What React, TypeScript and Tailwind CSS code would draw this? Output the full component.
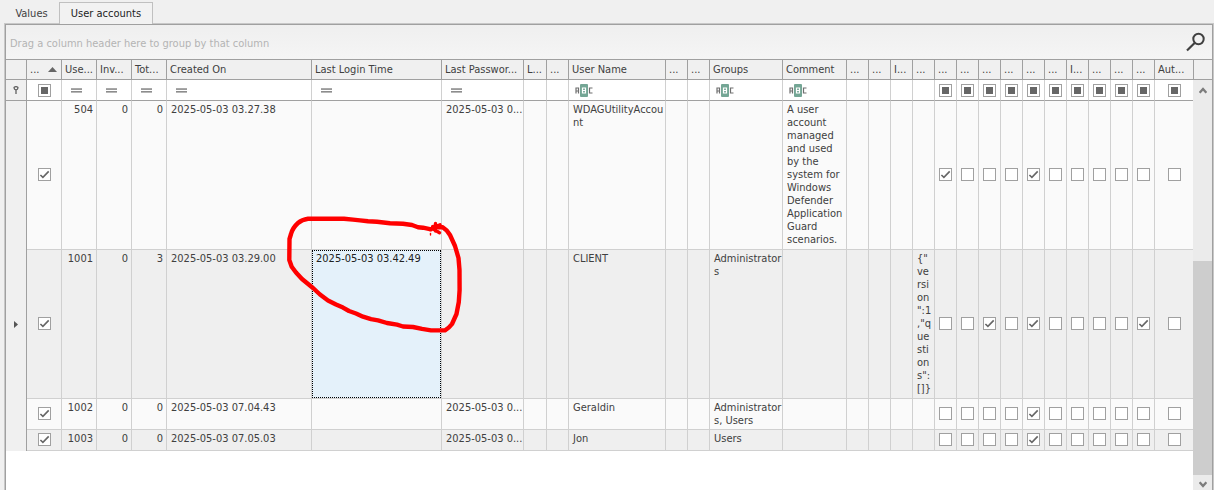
import React from "react";

type Kind = "check" | "number" | "date" | "text" | "none";
type Column = { title: string; width: string; kind: Kind; sorted?: boolean };

const narrow = (title: string, kind: Kind): Column => ({ title, width: "w-[22px]", kind });

const columns: Column[] = [
  { title: "...", width: "w-[35px]", kind: "check", sorted: true },
  { title: "Use...", width: "w-[35px]", kind: "number" },
  { title: "Inv...", width: "w-[35px]", kind: "number" },
  { title: "Tot...", width: "w-[35px]", kind: "number" },
  { title: "Created On", width: "w-[145px]", kind: "date" },
  { title: "Last Login Time", width: "w-[130px]", kind: "date" },
  { title: "Last Passwor...", width: "w-[82px]", kind: "date" },
  { title: "L...", width: "w-[23px]", kind: "none" },
  narrow("...", "none"),
  { title: "User Name", width: "w-[97px]", kind: "text" },
  narrow("...", "none"),
  narrow("...", "none"),
  { title: "Groups", width: "w-[73px]", kind: "text" },
  { title: "Comment", width: "w-[64px]", kind: "text" },
  narrow("...", "none"),
  narrow("...", "none"),
  narrow("I...", "none"),
  narrow("...", "none"),
  narrow("...", "check"),
  narrow("...", "check"),
  narrow("...", "check"),
  narrow("...", "check"),
  narrow("...", "check"),
  narrow("...", "check"),
  narrow("I...", "check"),
  narrow("...", "check"),
  narrow("...", "check"),
  narrow("...", "check"),
  { title: "Aut...", width: "", kind: "check" },
];

type Row = {
  height: string;
  shade: string;
  current?: boolean;
  cells: Record<number, string>;
  checked: number[];
};

const rows: Row[] = [
  {
    height: "h-[149px]",
    shade: "bg-[#fafafa]",
    cells: {
      1: "504",
      2: "0",
      3: "0",
      4: "2025-05-03 03.27.38",
      6: "2025-05-03 0...",
      9: "WDAGUtilityAccou\nnt",
      13: "A user\naccount\nmanaged\nand used\nby the\nsystem for\nWindows\nDefender\nApplication\nGuard\nscenarios.",
    },
    checked: [0, 18, 22],
  },
  {
    height: "h-[149px]",
    shade: "bg-[#efefef]",
    current: true,
    cells: {
      1: "1001",
      2: "0",
      3: "3",
      4: "2025-05-03 03.29.00",
      5: "2025-05-03 03.42.49",
      9: "CLIENT",
      12: "Administrator\ns",
      17: '{"\nve\nrsi\non\n":1\n,"q\nue\nsti\non\ns":\n[]}',
    },
    checked: [0, 20, 22, 27],
  },
  {
    height: "h-[31px]",
    shade: "bg-[#fafafa]",
    cells: {
      1: "1002",
      2: "0",
      3: "0",
      4: "2025-05-03 07.04.43",
      6: "2025-05-03 0...",
      9: "Geraldin",
      12: "Administrator\ns, Users",
    },
    checked: [0, 22],
  },
  {
    height: "h-[21px]",
    shade: "bg-[#efefef]",
    cells: {
      1: "1003",
      2: "0",
      3: "0",
      4: "2025-05-03 07.05.03",
      6: "2025-05-03 0...",
      9: "Jon",
      12: "Users",
    },
    checked: [0, 22],
  },
];

function Tick({ state, label }: { state: "on" | "off" | "mixed"; label: string }) {
  return (
    <label className="mx-auto grid size-[13px]">
      <input
        type="checkbox"
        aria-label={label}
        defaultChecked={state === "on"}
        className="col-start-1 row-start-1 size-[13px] appearance-none border border-[#a0a0a0] bg-white"
      />
      {state === "mixed" && (
        <span className="pointer-events-none col-start-1 row-start-1 m-[3px] bg-[#666666]" />
      )}
      {state === "on" && (
        <svg
          viewBox="0 0 13 13"
          className="pointer-events-none col-start-1 row-start-1 size-[13px]"
          fill="none"
          stroke="#666666"
          strokeWidth="1.6"
        >
          <path d="M2.4 7 L4.9 9.4 L10.7 3.4" />
        </svg>
      )}
    </label>
  );
}

function EqualsIcon() {
  return (
    <svg width="11" height="5" viewBox="0 0 11 5" fill="#707070">
      <rect y="0.400" width="11" height="1.300" />
      <rect y="3.200" width="11" height="1.300" />
    </svg>
  );
}

function AbcIcon() {
  return (
    <svg width="18" height="13" viewBox="0 0 18 13" fill="none">
      <rect x="5" y="0" width="8" height="13" rx="1" fill="#74a695" />
      <path d="M1 9.500V4H3.500V9.500M1 7H3.500" stroke="#6f6f6f" strokeWidth="1.200" />
      <path d="M17.500 4H14.500V9H17.500" stroke="#6f6f6f" strokeWidth="1.200" />
      <path d="M7.500 4H10.500V9H7.500ZM7.500 6.500H10.500" stroke="#ffffff" strokeWidth="1.200" />
    </svg>
  );
}

function FilterCell({ column }: { column: Column }) {
  if (column.kind === "check") return <Tick state="mixed" label="Filter by value" />;
  if (column.kind === "none") return null;
  const isText = column.kind === "text";
  return (
    <button
      type="button"
      aria-label="Filter condition"
      className={isText ? "ml-1.5 block" : "ml-[9px] block pt-px"}
    >
      {isText ? <AbcIcon /> : <EqualsIcon />}
    </button>
  );
}

function BodyCell({ row, column, index }: { row: Row; column: Column; index: number }) {
  const lines =
    index === columns.length - 1
      ? "border-b border-[#d0d0d0]"
      : "border-r border-b border-[#d0d0d0]";
  if (column.kind === "check") {
    return (
      <td className={`pb-px align-middle ${lines}`}>
        <Tick state={row.checked.includes(index) ? "on" : "off"} label="Value" />
      </td>
    );
  }
  const text = row.cells[index] ?? "";
  if (row.current && index === 5) {
    return (
      <td className={`h-px align-top ${lines}`}>
        <div className="h-full border border-dotted border-black bg-[#e4f1fa] px-[3px] pt-px text-[#222222]">
          {text}
        </div>
      </td>
    );
  }
  const place = column.kind === "number" ? "pr-[3px] text-right" : "pl-1 text-left";
  return <td className={`pt-0.5 align-top whitespace-pre ${lines} ${place}`}>{text}</td>;
}

function Scrollbar() {
  return (
    <div className="flex w-[19px] shrink-0 flex-col bg-[#ebebeb]">
      <div className="h-5 shrink-0 border-b border-l border-[#a0a0a0] bg-[#f0f0f0]" />
      <button type="button" aria-label="Scroll up" className="grid h-5 w-full place-items-center">
        <svg width="8" height="7" viewBox="0 0 8 7" fill="none" stroke="#7c7c7c" strokeWidth="2.400">
          <path d="M0.6 5.8 L4 2 L7.4 5.8" />
        </svg>
      </button>
      <div className="grow-[161]" />
      <div className="grow-[214] bg-[#cdcdcd]" />
      <button
        type="button"
        aria-label="Scroll down"
        className="grid h-[15px] w-full place-items-center pt-1"
      >
        <svg width="8" height="7" viewBox="0 0 8 7" fill="none" stroke="#7c7c7c" strokeWidth="2.400">
          <path d="M0.6 1.2 L4 5 L7.4 1.2" />
        </svg>
      </button>
    </div>
  );
}

function Scribble() {
  return (
    <svg
      className="pointer-events-none absolute top-[200px] left-[280px]"
      width="200"
      height="150"
      viewBox="280 200 200 150"
      fill="none"
      stroke="#ff0000"
      strokeLinejoin="round"
      strokeLinecap="round"
    >
      <path
        strokeWidth="4.4"
        d="M431 229.3 L423 227.7 L418 227.2 L412 225 L403 223.7 L390 223.2 L377 221.8 L368 221.2 L360 220.4 L353 219.6 L344 218.7 L308 218.7 Q302 219.5 298 223 Q292.500 228 291 234 L289.500 239 L289.300 260 L291.700 266.700 L296 272.500 L302 279 L313 288 L320 294.500 L328 300.500 L336 304.500 L343 307.600 L349 311 L356 313.500 L363 316.700 L371 319.200 L378 320.300 L387 323 L397 324.700 L403 326.500 L413 327 L422 328.900 L431 330.400 L445 330.400 Q449 328 452 324 L456.500 314 L458.800 302 L459.600 290 L459.500 270 L458.500 258 L455 246 L450 235 Q446.500 229.500 442.500 227.200 L433 227"
      />
      <path strokeWidth="3.4" d="M435.500 223.500 L435.500 231 M430 229.500 L440 224.800 M434 229.500 L439.500 232.700" />
      <path strokeWidth="1.4" d="M430.500 233.500 V235" />
    </svg>
  );
}

export default function App() {
  return (
    <div className="relative flex min-h-screen flex-col bg-[#f0f0f0] pl-1 font-['DejaVu_Sans_Condensed','Noto_Sans',sans-serif] text-[11px] leading-[13px] text-[#404040]">
      <div role="tablist" className="flex h-[23px] shrink-0 items-end">
        <button role="tab" aria-selected="false" type="button" className="h-[21px] w-[55px] pt-px">
          Values
        </button>
        <button
          role="tab"
          aria-selected="true"
          type="button"
          className="relative z-10 -mb-px h-[22px] w-[94px] border border-b-0 border-[#c0c0c0] bg-[#f2f2f2] text-[#222222]"
        >
          User accounts
        </button>
      </div>

      <div className="flex grow flex-col border border-b-0 border-[#c8c8c8]">
        <div className="flex grow flex-col border border-b-0 border-[#a0a0a0] bg-white">
          <div className="flex h-[35px] shrink-0 items-center justify-between border-b border-[#a0a0a0] bg-linear-to-b from-[#efefef] to-[#f5f5f5] pr-1.5 pl-1">
            <span className="pt-0.5 text-[#b4b4b4]">Drag a column header here to group by that column</span>
            <button type="button" aria-label="Search">
              <svg width="20" height="20" viewBox="0 0 20 20" fill="none" stroke="#404040">
                <circle cx="12.500" cy="7" r="5.200" strokeWidth="2" />
                <path d="M8.600 11 L1 18.500" strokeWidth="2.200" />
              </svg>
            </button>
          </div>

          <div className="flex grow items-stretch">
            <div className="min-w-0 grow">
              <table className="w-full table-fixed border-separate border-spacing-0">
                <colgroup>
                  <col className="w-[21px]" />
                  {columns.map((c, i) => (
                    <col key={i} className={c.width} />
                  ))}
                </colgroup>
                <thead>
                  <tr className="h-5 bg-[#f0f0f0]">
                    <th className="border-r border-b border-[#a0a0a0]" />
                    {columns.map((c, i) => (
                      <th
                        key={i}
                        scope="col"
                        className={
                          i === columns.length - 1
                            ? "border-b border-[#a0a0a0] pl-[3px] text-left font-normal whitespace-nowrap"
                            : "border-r border-b border-[#a0a0a0] pl-[3px] text-left font-normal whitespace-nowrap"
                        }
                      >
                        <span className="flex items-center justify-between pr-1">
                          {c.title}
                          {c.sorted && (
                            <svg width="9" height="5" viewBox="0 0 9 5" fill="#666666" className="shrink-0">
                              <path d="M4.500 0 L9 5 H0 Z" />
                            </svg>
                          )}
                        </span>
                      </th>
                    ))}
                  </tr>
                  <tr className="h-[21px] bg-white">
                    <td className="border-r border-b border-[#a0a0a0] bg-[#f0f0f0]">
                      <svg width="6" height="8" viewBox="0 0 6 8" className="mx-auto block" fill="none" stroke="#555555">
                        <path d="M1 1.800 Q1 0.600 3 0.600 Q5 0.600 5 1.800 Q5 3.600 3 4 Q1 3.600 1 1.800 Z M3 4 V8" strokeWidth="1.200" />
                      </svg>
                    </td>
                    {columns.map((c, i) => (
                      <td
                        key={i}
                        className={
                          i === columns.length - 1
                            ? "border-b border-b-[#a0a0a0]"
                            : "border-r border-b border-r-[#d0d0d0] border-b-[#a0a0a0]"
                        }
                      >
                        <FilterCell column={c} />
                      </td>
                    ))}
                  </tr>
                </thead>
                <tbody>
                  {rows.map((row, r) => (
                    <tr key={r} className={`${row.height} ${row.shade}`}>
                      <td className="border-r border-[#a0a0a0] bg-[#f0f0f0] align-middle">
                        {row.current && (
                          <svg width="4" height="7" viewBox="0 0 4 7" className="mx-auto block" fill="#555555">
                            <path d="M0 0 L4 3.500 L0 7 Z" />
                          </svg>
                        )}
                      </td>
                      {columns.map((c, i) => (
                        <BodyCell key={i} row={row} column={c} index={i} />
                      ))}
                    </tr>
                  ))}
                </tbody>
              </table>
            </div>
            <Scrollbar />
          </div>
        </div>
      </div>
      <Scribble />
    </div>
  );
}
